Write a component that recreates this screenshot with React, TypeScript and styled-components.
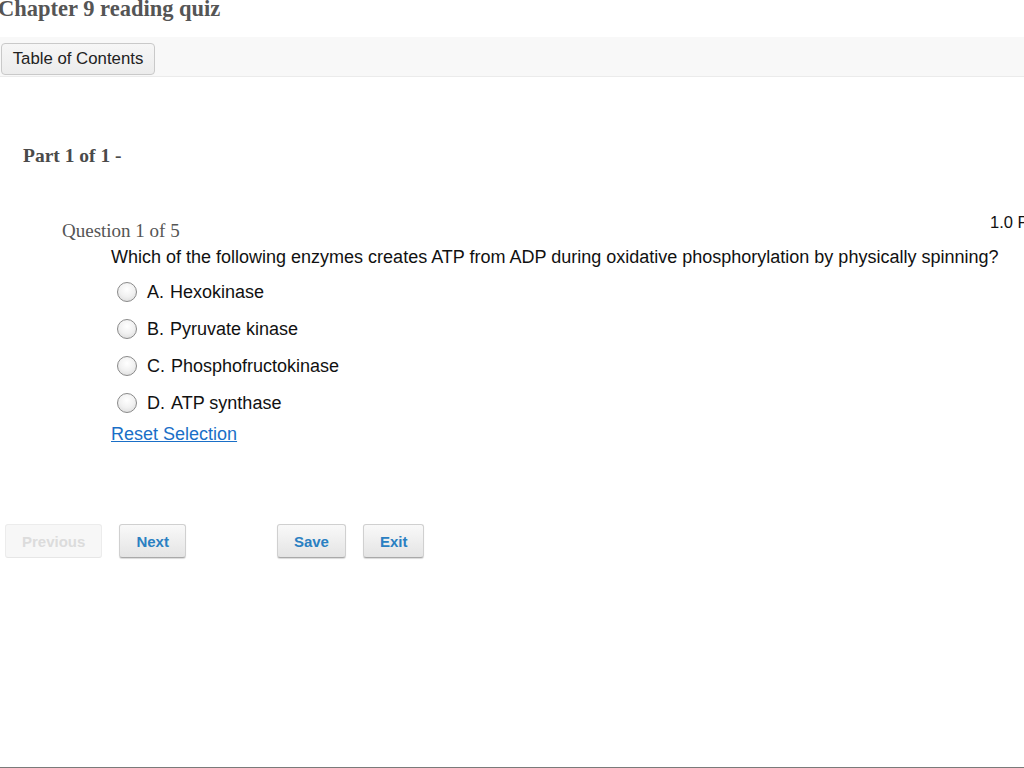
import styled, { createGlobalStyle } from 'styled-components';

const GlobalStyle = createGlobalStyle`
  html, body {
    margin: 0;
    padding: 0;
    background: #fff;
  }
  body {
    font-family: "Liberation Sans", Arial, sans-serif;
    overflow: hidden;
  }
`;

const choices = [
  { key: 'A', text: 'Hexokinase' },
  { key: 'B', text: 'Pyruvate kinase' },
  { key: 'C', text: 'Phosphofructokinase' },
  { key: 'D', text: 'ATP synthase' },
];

export default function App() {
  return (
    <Page>
      <GlobalStyle />
      <QuizTitle>Chapter 9 reading quiz</QuizTitle>
      <Toolbar>
        <TocButton>Table of Contents</TocButton>
      </Toolbar>
      <PartTitle>Part 1 of 1 -</PartTitle>
      <QuestionBlock>
        <QuestionHeader>
          <QuestionNumber>Question 1 of 5</QuestionNumber>
          <Points>1.0 Points</Points>
        </QuestionHeader>
        <QuestionBody>
          <QuestionText>
            Which of the following enzymes creates ATP from ADP during oxidative phosphorylation by
            physically spinning?
          </QuestionText>
          <ChoiceList>
            {choices.map((c) => (
              <Choice key={c.key}>
                <Radio />
                <ChoiceLetter>{c.key}.</ChoiceLetter>
                <span>{c.text}</span>
              </Choice>
            ))}
          </ChoiceList>
          <ResetLink href="#">Reset Selection</ResetLink>
        </QuestionBody>
      </QuestionBlock>
      <NavBar>
        <NavButton $disabled>Previous</NavButton>
        <NavButton>Next</NavButton>
        <Spacer />
        <NavButton>Save</NavButton>
        <NavButton>Exit</NavButton>
      </NavBar>
      <BottomLine />
    </Page>
  );
}

const Page = styled.div`
  width: 1024px;
  height: 768px;
  position: relative;
  overflow: hidden;
  display: flex;
  flex-direction: column;
`;

const QuizTitle = styled.h1`
  margin: 0 0 0 -2px;
  font-family: "Liberation Serif", "Times New Roman", serif;
  font-weight: bold;
  font-size: 22.5px;
  line-height: 18px;
  color: #555;
  height: 37px;
  white-space: nowrap;
`;

const Toolbar = styled.div`
  height: 40px;
  background: #f8f8f8;
  border-bottom: 1px solid #ebebeb;
  box-sizing: border-box;
  display: flex;
  align-items: flex-start;
  padding: 6px 1px 0;
`;

const TocButton = styled.button`
  height: 32px;
  width: 154px;
  padding: 0 8px;
  font-family: "Liberation Sans", Arial, sans-serif;
  font-size: 16.8px;
  color: #222;
  background: linear-gradient(#f6f6f6, #ececec);
  border: 1px solid #c9c9c9;
  border-radius: 4px;
`;

const PartTitle = styled.h2`
  margin: 69px 0 0 23px;
  font-family: "Liberation Serif", "Times New Roman", serif;
  font-weight: bold;
  font-size: 19.5px;
  line-height: 20px;
  color: #4a4a4a;
`;

const QuestionBlock = styled.div`
  margin-top: 47px;
  display: flex;
  flex-direction: column;
`;

const QuestionHeader = styled.div`
  display: flex;
  justify-content: space-between;
  padding-left: 62px;
  position: relative;
`;

const QuestionNumber = styled.div`
  margin-top: 8px;
  font-family: "Liberation Serif", "Times New Roman", serif;
  font-size: 19px;
  line-height: 20px;
  color: #555;
`;

const Points = styled.div`
  position: absolute;
  left: 990px;
  top: 0;
  font-size: 16.5px;
  line-height: 18px;
  color: #111;
  white-space: nowrap;
`;

const QuestionBody = styled.div`
  padding-left: 111px;
  display: flex;
  flex-direction: column;
`;

const QuestionText = styled.div`
  font-size: 18px;
  line-height: 20px;
  margin-top: 6px;
  color: #111;
  white-space: nowrap;
`;

const ChoiceList = styled.div`
  display: flex;
  flex-direction: column;
  margin-top: 15px;
  gap: 17px;
  padding-left: 6px;
`;

const Choice = styled.label`
  display: flex;
  align-items: center;
  height: 20px;
  font-size: 18px;
  color: #111;
`;

const Radio = styled.span`
  width: 20px;
  height: 20px;
  box-sizing: border-box;
  border-radius: 50%;
  border: 1px solid #8a8a8a;
  background: radial-gradient(circle at 50% 35%, #ffffff 0%, #f1f1f1 50%, #d6d6d6 100%);
  margin-right: 10px;
`;

const ChoiceLetter = styled.span`
  margin-right: 6px;
`;

const ResetLink = styled.a`
  margin-top: 11px;
  font-size: 18px;
  line-height: 20px;
  color: #1a6fc7;
  text-decoration: underline;
  align-self: flex-start;
`;

const NavBar = styled.div`
  margin-top: 80px;
  display: flex;
  align-items: center;
  gap: 17px;
  padding-left: 5px;
`;

const Spacer = styled.div`
  width: 57px;
`;

const NavButton = styled.button<{ $disabled?: boolean }>`
  height: 34px;
  padding: 0 16px;
  font-family: "Liberation Sans", Arial, sans-serif;
  font-weight: bold;
  font-size: 15px;
  color: ${(p) => (p.$disabled ? '#dcdcdc' : '#2a80c2')};
  background: ${(p) => (p.$disabled ? '#f7f7f7' : 'linear-gradient(#f9f9f9, #e4e4e4)')};
  border: 1px solid ${(p) => (p.$disabled ? '#ececec' : '#d0d0d0')};
  border-bottom-color: ${(p) => (p.$disabled ? '#e6e6e6' : '#a9a9a9')};
  border-radius: 3px;
  box-shadow: ${(p) => (p.$disabled ? 'none' : '0 1px 1px rgba(0,0,0,0.15)')};
`;

const BottomLine = styled.div`
  position: absolute;
  left: 0;
  right: 0;
  bottom: 0;
  height: 1px;
  background: #7a7a7a;
`;
